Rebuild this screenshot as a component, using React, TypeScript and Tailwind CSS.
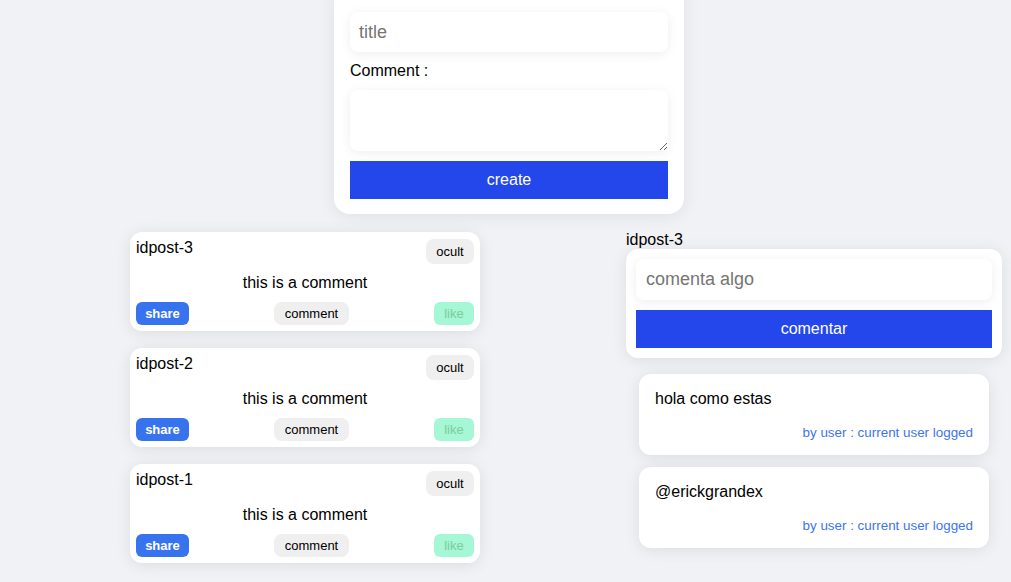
import React from "react";

const posts = ["idpost-3", "idpost-2", "idpost-1"];

const comments = ["hola como estas", "@erickgrandex"];

const PostCard: React.FC<{ id: string }> = ({ id }) => (
  <div className="bg-white rounded-xl px-[6px] pt-[7px] pb-[6px] shadow-[0_2px_16px_rgba(0,0,0,0.09)]">
    <div className="flex justify-between items-start h-[25px]">
      <span className="text-base leading-[18px]">{id}</span>
      <button className="bg-[#efefef] rounded-lg h-[25px] w-[48px] text-[13px]">ocult</button>
    </div>
    <p className="text-center text-base leading-[18px] mt-[10px]">this is a comment</p>
    <div className="flex justify-between items-center mt-[10px] h-[23px]">
      <button className="bg-[#3873ef] text-white font-bold rounded-md h-[23px] w-[53px] text-[13px]">share</button>
      <button className="bg-[#efefef] rounded-lg h-[23px] w-[75px] text-[13px]">comment</button>
      <button className="bg-[#a5f7d6] text-[#7dcc9c] rounded-md h-[23px] w-[40px] text-[13px]">like</button>
    </div>
  </div>
);

export default function App() {
  return (
    <div
      className="min-h-screen bg-[#f0f2f5] text-black overflow-hidden"
      style={{ fontFamily: '"Liberation Sans", Arial, sans-serif' }}
    >
      {/* create form */}
      <div className="ml-[334px] w-[350px] -mt-4 bg-white rounded-2xl px-4 pt-7 pb-[15px] shadow-[0_2px_18px_rgba(0,0,0,0.08)]">
        <input
          placeholder="title"
          className="w-full h-10 rounded-lg px-[9px] text-lg outline-none bg-white shadow-[0_2px_12px_rgba(0,0,0,0.07)] placeholder:text-[#757575]"
        />
        <label className="block mt-[10px] text-base leading-[18px]">Comment :</label>
        <textarea className="block w-full h-[61px] mt-[10px] rounded-lg outline-none bg-white shadow-[0_2px_12px_rgba(0,0,0,0.07)]" />
        <button className="w-full h-[38px] mt-[10px] bg-[#2447eb] text-white text-base">create</button>
      </div>

      <div className="flex items-start mt-[18px]">
        {/* posts */}
        <div className="ml-[130px] w-[350px] flex flex-col gap-[17px]">
          {posts.map((p) => (
            <PostCard key={p} id={p} />
          ))}
        </div>

        {/* comment panel */}
        <div className="ml-[146px] w-[376px] -mt-[1px]">
          <div className="text-base leading-[18px]">idpost-3</div>
          <div className="bg-white rounded-xl p-[10px] shadow-[0_2px_16px_rgba(0,0,0,0.09)]">
            <input
              placeholder="comenta algo"
              className="w-full h-[41px] rounded-lg px-[10px] text-lg outline-none bg-white shadow-[0_2px_12px_rgba(0,0,0,0.07)] placeholder:text-[#757575]"
            />
            <button className="w-full h-[38px] mt-[10px] bg-[#2447eb] text-white text-base">comentar</button>
          </div>
          <div className="flex flex-col gap-3 mt-4 mx-[13px]">
            {comments.map((c) => (
              <div
                key={c}
                className="bg-white rounded-xl h-[81px] px-4 pt-4 shadow-[0_2px_16px_rgba(0,0,0,0.09)]"
              >
                <p className="text-base leading-[18px]">{c}</p>
                <p className="text-right text-[13.4px] leading-[15px] mt-[17px] text-[#3d74f0]">
                  by user : current user logged
                </p>
              </div>
            ))}
          </div>
        </div>
      </div>
    </div>
  );
}
